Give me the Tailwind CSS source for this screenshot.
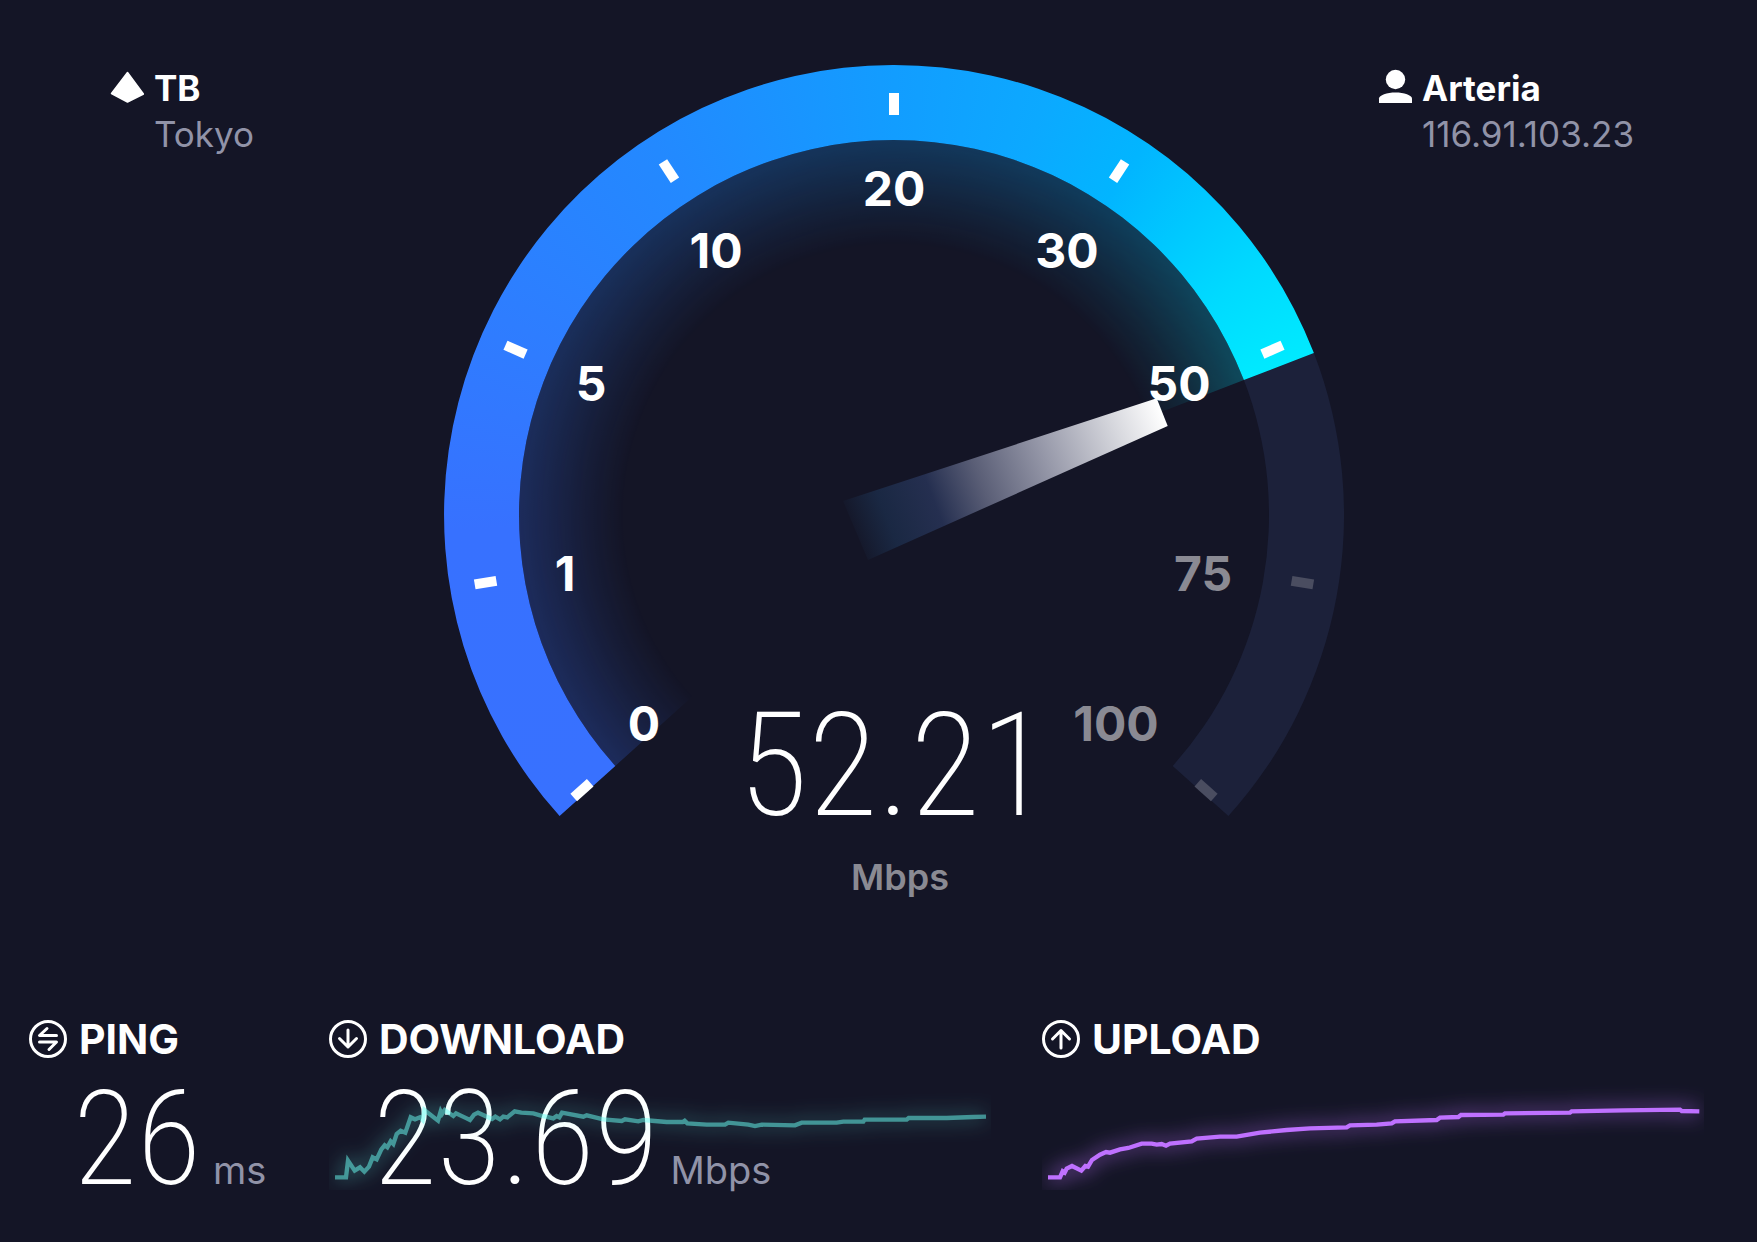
<!DOCTYPE html>
<html lang="en">
<head>
<meta charset="utf-8">
<meta name="viewport" content="width=device-width, initial-scale=1">
<title>Speed test</title>
<script src="https://cdn.jsdelivr.net/npm/@tailwindcss/browser@4"></script>
</head>
<body class="min-h-screen bg-[#141526] font-['Inter',sans-serif] text-white">
<main class="flex flex-col pt-[65px]">

  <section class="grid grid-cols-[334fr_900fr_334fr] pr-[79px] pl-[110px]">
    <div class="flex items-start gap-[10px]">
      <svg class="mt-1 w-[34px] shrink-0" viewBox="0 0 34 34" fill="#fff" aria-hidden="true"><path d="M17.500 3.500L33.500 25 17.500 33 1.500 24.500z" stroke="#fff" stroke-width="1.500" stroke-linejoin="round"/></svg>
      <div class="text-[35px] leading-[46px]">
        <h2 class="font-bold">TB</h2>
        <p class="text-[#9193a8]">Tokyo</p>
      </div>
    </div>

    <svg class="w-full" viewBox="0 0 900 850" role="img" aria-label="Download speed gauge">
      <defs>
        <clipPath id="band"><path d="M115.600 751.100A450 450 0 1 1 869.900 288.100L799.900 315.100A375 375 0 1 0 171.300 700.900z"/></clipPath>
        <clipPath id="sector"><path d="M450 450L171.300 700.900A375 375 0 1 1 799.900 315.100z"/></clipPath>
        <radialGradient id="fade" gradientUnits="userSpaceOnUse" cx="450" cy="450" r="375">
          <stop offset="0.720" stop-color="#fff" stop-opacity="0"/>
          <stop offset="0.820" stop-color="#fff" stop-opacity="0.080"/>
          <stop offset="1" stop-color="#fff" stop-opacity="0.250"/>
        </radialGradient>
        <mask id="glow" maskUnits="userSpaceOnUse" x="0" y="0" width="900" height="900"><rect width="900" height="900" fill="url(#fade)"/></mask>
        <linearGradient id="needle" gradientUnits="userSpaceOnUse" x1="405" y1="467" x2="718" y2="347">
          <stop offset="0" stop-color="#1a2b46" stop-opacity="0"/>
          <stop offset="0.120" stop-color="#1a2843"/>
          <stop offset="0.270" stop-color="#252f50"/>
          <stop offset="0.420" stop-color="#5a5e76"/>
          <stop offset="0.620" stop-color="#9496a7"/>
          <stop offset="0.850" stop-color="#d6d7dd"/>
          <stop offset="1" stop-color="#fff"/>
        </linearGradient>
      </defs>
      <path fill="#1c213a" d="M869.900 288.100A450 450 0 0 1 784.400 751.100L728.700 700.900A375 375 0 0 0 799.900 315.100z"/>
      <g clip-path="url(#sector)"><g mask="url(#glow)">
        <foreignObject width="900" height="900"><div class="size-full bg-[conic-gradient(from_228deg,#3871ff_0deg,#3771ff_40deg,#2f7cff_66deg,#2389ff_99deg,#129dff_132deg,#0ca9ff_152deg,#02b5ff_166deg,#00c8ff_177deg,#00daff_188deg,#00eaff_201deg,#00eaff_214deg,#3871ff_320deg)]"></div></foreignObject>
      </g></g>
      <g clip-path="url(#band)">
        <foreignObject width="900" height="900"><div class="size-full bg-[conic-gradient(from_228deg,#3871ff_0deg,#3771ff_40deg,#2f7cff_66deg,#2389ff_99deg,#129dff_132deg,#0ca9ff_152deg,#02b5ff_166deg,#00c8ff_177deg,#00daff_188deg,#00eaff_201deg,#00eaff_214deg,#3871ff_320deg)]"></div></foreignObject>
      </g>
      <g fill="#fff">
        <rect x="445" y="23" width="10" height="22" transform="rotate(-131.400 450 450)"/>
        <rect x="445" y="25" width="10" height="22" transform="rotate(-99.400 450 450)"/>
        <rect x="445" y="26" width="10" height="22" transform="rotate(-66.400 450 450)"/>
        <rect x="445" y="28" width="10" height="22" transform="rotate(-33.200 450 450)"/>
        <rect x="445" y="28" width="10" height="22"/>
        <rect x="445" y="28" width="10" height="22" transform="rotate(33.200 450 450)"/>
        <rect x="445" y="26" width="10" height="22" transform="rotate(66.400 450 450)"/>
      </g>
      <g fill="#4a4d60">
        <rect x="445" y="25" width="10" height="22" transform="rotate(99.400 450 450)"/>
        <rect x="445" y="23" width="10" height="22" transform="rotate(131.400 450 450)"/>
      </g>
      <g class="text-[48px] font-bold" fill="#fff" text-anchor="middle">
        <text x="200" y="676">0</text>
        <text x="121" y="526">1</text>
        <text x="147" y="336">5</text>
        <text x="272" y="203">10</text>
        <text x="450" y="141">20</text>
        <text x="623" y="203">30</text>
        <text x="735" y="336">50</text>
        <text x="759" y="526" fill="#8a8a93">75</text>
        <text x="672" y="676" fill="#8a8a93">100</text>
      </g>
      <path fill="url(#needle)" d="M399 436L712.700 333.300 723.700 361 424 495z"/>
      <text class="font-['Roboto_Condensed','Roboto',sans-serif] text-[144px] font-extralight" x="450" y="750" fill="#fff" text-anchor="middle">52.21</text>
      <text class="text-[36px] font-semibold" x="456" y="825" fill="#8a8a93" text-anchor="middle">Mbps</text>
    </svg>

    <div class="flex items-start gap-[10px] pl-[34px]">
      <svg class="mt-1 w-[34px] shrink-0" viewBox="0 0 34 34" fill="#fff" aria-hidden="true"><circle cx="17.500" cy="10.500" r="9.700"/><path d="M1 34V29.500C1 26 9 23.400 17.500 23.400S34 26 34 29.500V34z"/></svg>
      <div class="text-[35px] leading-[46px]">
        <h2 class="font-bold">Arteria</h2>
        <p class="text-[#9193a8]">116.91.103.23</p>
      </div>
    </div>
  </section>

  <section class="mt-[102px] grid grid-cols-[300fr_713fr_715fr] pl-[29px]">
    <div>
      <h2 class="flex items-center gap-3 text-[41px] leading-[44px] font-bold">
        <svg class="w-[38px] shrink-0" viewBox="0 0 38 38" fill="none" stroke="#fff" stroke-width="3" stroke-linecap="round" stroke-linejoin="round" aria-hidden="true"><circle cx="19" cy="19" r="17.500"/><path d="M18 8.500L10.500 15.500H27.500M10.500 22H27.500L20 29.500"/></svg>
        PING
      </h2>
      <p class="flex items-baseline gap-3 pt-2 pl-[44px]">
        <span class="font-['Roboto_Condensed','Roboto',sans-serif] text-[132px] leading-[140px] font-extralight">26</span>
        <span class="text-[38px] text-[#9193a8]">ms</span>
      </p>
    </div>

    <div class="relative">
      <h2 class="flex items-center gap-3 text-[41px] leading-[44px] font-bold">
        <svg class="w-[38px] shrink-0" viewBox="0 0 38 38" fill="none" stroke="#fff" stroke-width="3" stroke-linecap="round" stroke-linejoin="round" aria-hidden="true"><circle cx="19" cy="19" r="17.500"/><path d="M19 10V27M10.500 18.500L19 27L27.500 18.500"/></svg>
        DOWNLOAD
      </h2>
      <p class="flex items-baseline gap-3 pt-2 pl-[44px]">
        <span class="font-['Roboto_Condensed','Roboto',sans-serif] text-[132px] leading-[140px] font-extralight">23.69</span>
        <span class="text-[38px] text-[#9193a8]">Mbps</span>
      </p>
      <svg class="absolute top-[43px] right-[51px] left-0" viewBox="27 180 1986 390" fill="none" role="img" aria-label="Download speed over time">
        <defs><filter id="haze" filterUnits="userSpaceOnUse" x="27" y="180" width="1986" height="390"><feGaussianBlur stdDeviation="28"/></filter></defs>
        <g stroke="#6afff3">
          <path id="down" stroke-width="13" stroke-opacity="0.500" d="M45 532H78L84 482 104 512 120 502 133 515 147 500 158 472 170 478 184 448 194 436 202 442 212 424 220 432 230 402 242 392 256 398 272 352 285 358 300 352 308 360 313 330 354 362 362 334 366 342 374 330 400 348 408 340 440 355 450 360 462 344 474 338 516 357 526 350 540 358 550 350 562 352 584 334 604 338 640 340 660 346 700 355 710 348 718 352 726 338 790 350 800 346 850 358 905 363 915 358 955 364 970 360 1040 366 1088 366 1094 362 1102 370 1160 374 1215 374 1225 368 1285 374 1305 378 1325 374 1425 376 1445 368 1550 368 1570 365 1630 365 1634 359 1760 359 1766 354 1880 354 1960 351 1998 350"/>
          <use href="#down" filter="url(#haze)"/>
        </g>
      </svg>
    </div>

    <div class="relative">
      <h2 class="flex items-center gap-3 text-[41px] leading-[44px] font-bold">
        <svg class="w-[38px] shrink-0" viewBox="0 0 38 38" fill="none" stroke="#fff" stroke-width="3" stroke-linecap="round" stroke-linejoin="round" aria-hidden="true"><circle cx="19" cy="19" r="17.500"/><path d="M19 28V10.500M10.500 19L19 10.500L27.500 19"/></svg>
        UPLOAD
      </h2>
      <svg class="absolute top-[43px] right-[53px] left-0" viewBox="66 180 1986 390" fill="none" role="img" aria-label="Upload speed over time">
        <defs><filter id="haze-up" filterUnits="userSpaceOnUse" x="66" y="180" width="1986" height="390"><feGaussianBlur stdDeviation="28"/></filter></defs>
        <g stroke="#bf71ff">
          <path id="up" stroke-width="13" d="M84 532H120L128 514 134 518 140 506 156 498 184 512 196 498 204 500 216 480 240 464 258 456 270 458 300 448 325 444 365 431 395 431 410 434 425 432 438 437 450 431 515 424 530 416 600 410 650 410 720 398 800 390 870 385 980 382 990 376 1070 374 1115 370 1125 364 1250 360 1260 353 1315 351 1323 345 1450 344 1455 340 1650 338 1655 334 1810 331 1980 329 1985 333 2038 334"/>
          <use href="#up" filter="url(#haze-up)"/>
        </g>
      </svg>
    </div>
  </section>
</main>
</body>
</html>
